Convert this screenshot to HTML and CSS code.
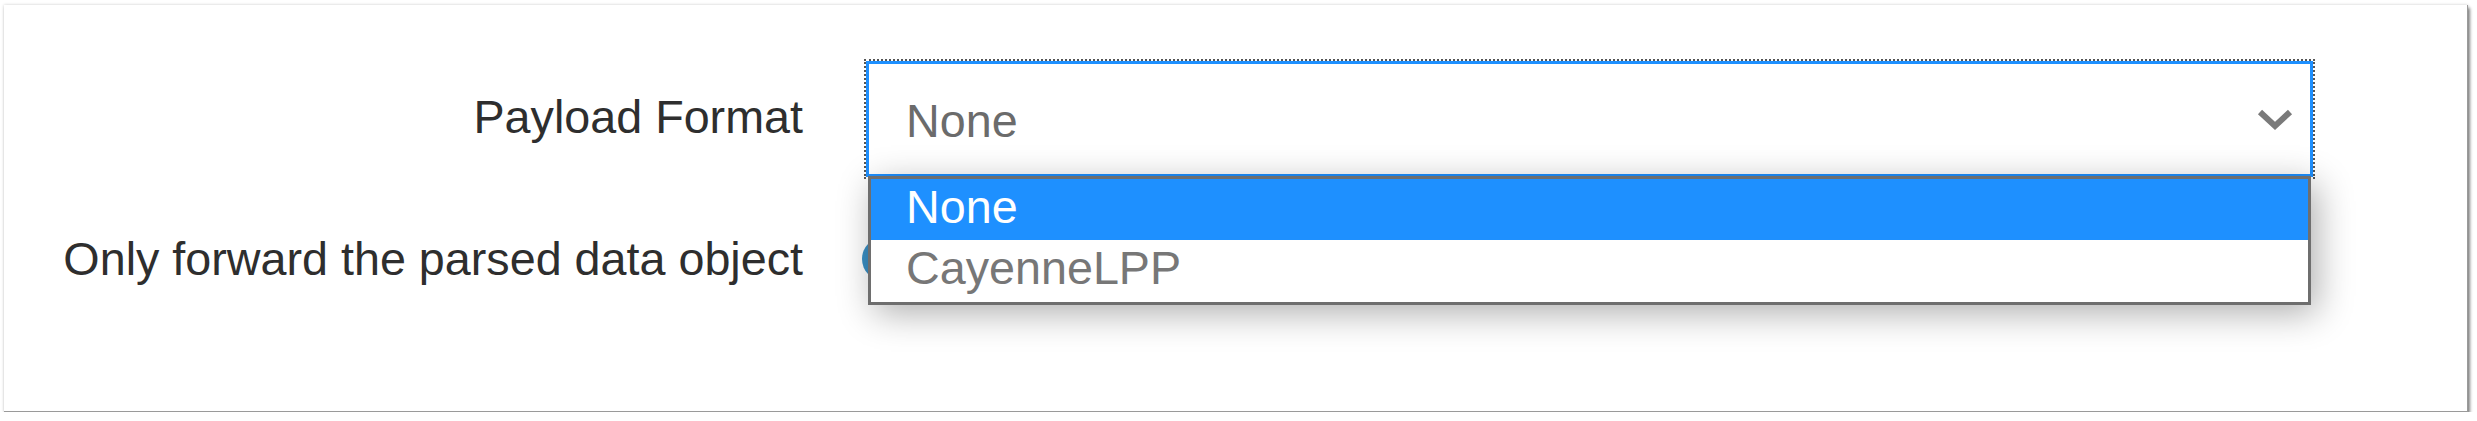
FILE: index.html
```html
<!DOCTYPE html>
<html>
<head>
<meta charset="utf-8">
<link rel="stylesheet" href="styles.css">
</head>
<body>
<div class="panel">
  <div class="form">
    <div class="row">
      <label class="label">Payload Format</label>
      <div class="field">
        <div class="select">
          <span class="value">None</span>
          <svg class="chevron" width="36" height="24" viewBox="0 0 36 24"><polyline points="3,5 18,19 33,5" fill="none" stroke="#7a7a7a" stroke-width="6"/></svg>
        </div>
        <ul class="dropdown">
          <li class="option selected">None</li>
          <li class="option second">CayenneLPP</li>
        </ul>
      </div>
    </div>
    <div class="row row2">
      <label class="label">Only forward the parsed data object</label>
      <div class="field"><span class="toggle"></span></div>
    </div>
  </div>
</div>
</body>
</html>
```
FILE: styles.css
```css
html, body {
  margin: 0;
  padding: 0;
  background: #ffffff;
}
body {
  font-family: "Liberation Sans", Arial, sans-serif;
  font-size: 46.7px;
  padding-top: 5px;
}
.panel {
  margin: 0 0 0 4px;
  width: 2464px;
  height: 407px;
  box-sizing: border-box;
  padding: 56px 0 0 30px;
  background: #fff;
  border-right: 1px solid #9a9a9a;
  border-bottom: 1px solid #9a9a9a;
  box-shadow: 2px 3px 3px rgba(0,0,0,0.45), 0 0 3px rgba(0,0,0,0.2);
}
.form {
  display: flex;
  flex-direction: column;
  gap: 56px;
}
.row {
  display: flex;
  align-items: center;
  gap: 63px;
}
.label {
  flex: none;
  width: 769px;
  text-align: right;
  color: #2e2e2e;
  line-height: 52px;
}
.row:first-child .label {
  padding-bottom: 4px;
}
.field {
  position: relative;
  flex: none;
}
.select {
  width: 1447px;
  height: 116px;
  box-sizing: border-box;
  border: 3px solid #1e90ff;
  outline: 2px dotted #555;
  display: flex;
  align-items: center;
  justify-content: space-between;
  padding: 3px 17px 0 37px;
  background: #fff;
  color: #6b6b6b;
}
.value {
  line-height: 52px;
}
.chevron {
  display: block;
  margin-top: -3px;
}
.dropdown {
  position: absolute;
  left: 2px;
  top: 115px;
  z-index: 2;
  width: 1443px;
  box-sizing: border-box;
  margin: 0;
  padding: 0;
  list-style: none;
  background: #fff;
  border: 3px solid #6e6e6e;
  box-shadow: 6px 8px 34px rgba(0,0,0,0.32);
}
.option {
  height: 61px;
  box-sizing: border-box;
  padding: 0 0 4px 35px;
  line-height: 57px;
  color: #777;
}
.option.second {
  height: 62px;
  padding-bottom: 5px;
}
.option.selected {
  background: #1e90ff;
  color: #fff;
}
.toggle {
  display: block;
  margin-left: -4px;
  width: 44px;
  height: 44px;
  border-radius: 50%;
  background: #3a8fc4;
}
```
